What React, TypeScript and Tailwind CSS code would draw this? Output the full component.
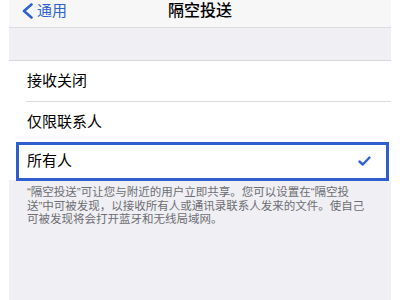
export default function App() {
    return (
        <div className=" w-full h-[300px] bg-white flex justify-center overflow-hidden " style={{ fontFamily: '"Liberation Sans", "Noto Sans CJK SC", sans-serif' }} >
            <div className=" w-[382px] h-full bg-[#efeff4] flex flex-col " >
                {/* nav bar */}
                <div className=" relative h-[28px] shrink-0 bg-[#f7f7f7] border-b border-[#dcdce0] flex items-start " >
                    <div className=" flex items-center pl-[12px] pt-[2px] text-[#2f62cf] " >
                        <svg width="13" height="16" viewBox="0 0 13 16" fill="none" >
                            <path d="M10.5 1.5 L3 8 L10.5 14.5" stroke="currentColor" strokeWidth="2.6" strokeLinecap="round" strokeLinejoin="round" />
                        </svg>
                        <span className=" ml-[3px] text-[15px] leading-[18px] " >通用</span>
                    </div>
                    <p className=" absolute left-0 right-0 top-[1px] text-center text-[16px] leading-[20px] font-medium text-black " >隔空投送</p>
                </div>

                <div className=" h-[32px] shrink-0 " ></div>

                {/* options */}
                <div className=" bg-white border-t border-[#d8d8dc] " >
                    <div className=" h-[40px] flex items-center pl-[18px] text-[15px] text-black " >接收关闭</div>
                    <div className=" ml-[17px] h-px bg-[#dcdce0] " ></div>
                    <div className=" h-[40px] flex items-center pl-[18px] text-[15px] text-black " >仅限联系人</div>
                    <div className=" relative h-[38px] flex items-center justify-between pl-[18px] pr-[20px] text-[15px] text-black " >
                        <span className=" pt-[1px] " >所有人</span>
                        <svg width="13" height="10" viewBox="0 0 13 10" fill="none" >
                            <path d="M1.5 5.5 L4.8 8.5 L11.5 1.5" stroke="#2f62cf" strokeWidth="2.4" strokeLinecap="round" strokeLinejoin="round" />
                        </svg>
                        <div className=" absolute left-[7px] right-[2px] top-0 bottom-[-1px] border-[3px] border-[#2f5fce] " ></div>
                    </div>
                </div>

                {/* footer */}
                <p className=" pt-[6px] pl-[18px] text-[11.5px] leading-[13.5px] text-[#6d6d72] whitespace-nowrap " >
                    “隔空投送”可让您与附近的用户立即共享。您可以设置在“隔空投<br />
                    送”中可被发现，以接收所有人或通讯录联系人发来的文件。使自己<br />
                    可被发现将会打开蓝牙和无线局域网。
                </p>
            </div>
        </div>
    )
}
